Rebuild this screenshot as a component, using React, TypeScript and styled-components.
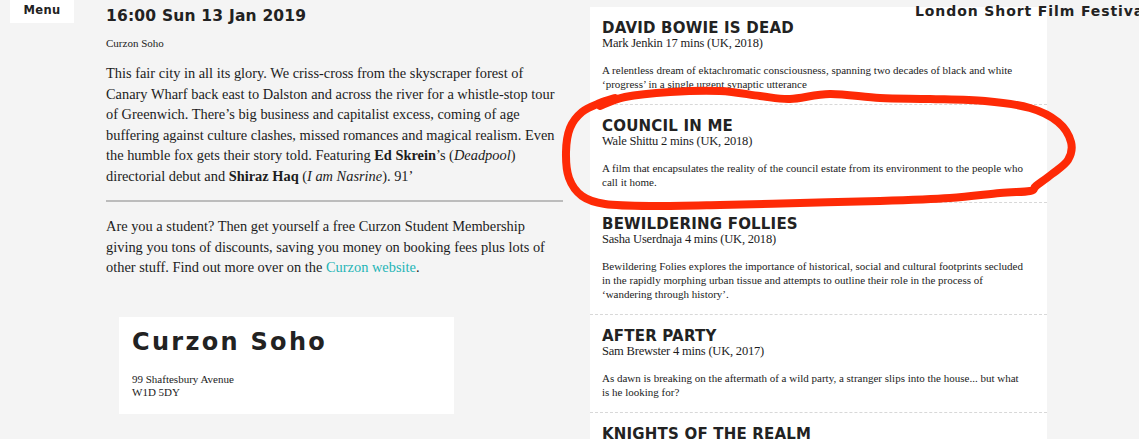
import styled, { createGlobalStyle } from "styled-components";

const GlobalStyle = createGlobalStyle`
  html, body {
    margin: 0;
    padding: 0;
    background: #f4f4f4;
    overflow: hidden;
  }
  body {
    width: 1139px;
    height: 439px;
    color: #1c1c1c;
    font-family: "Liberation Serif", "DejaVu Serif", serif;
  }
`;

const wide = `"DejaVu Sans", "Liberation Sans", sans-serif`;

const Page = styled.div`
  position: relative;
  display: flex;
  align-items: flex-start;
  height: 439px;
`;

const Nav = styled.nav`
  width: 96px;
  padding-left: 10px;
  flex-shrink: 0;
`;

const MenuButton = styled.div`
  width: 64px;
  height: 23px;
  background: #fff;
  display: flex;
  justify-content: center;
  padding-top: 3px;
  box-sizing: border-box;
  font-family: ${wide};
  font-weight: 700;
  font-size: 11.5px;
  letter-spacing: 0.4px;
  color: #222;
`;

const Main = styled.main`
  width: 457px;
  margin-right: 27px;
  padding-top: 6px;
  flex-shrink: 0;
`;

const Title = styled.h1`
  margin: 0;
  font-family: ${wide};
  font-weight: 700;
  font-size: 15.5px;
  line-height: 20px;
  letter-spacing: 0.2px;
  color: #222;
`;

const Venue = styled.div`
  margin-top: 10px;
  font-size: 11px;
  line-height: 14px;
`;

const Para = styled.p<{ gap: number }>`
  margin: ${({ gap }) => gap}px 0 0;
  font-size: 14.4px;
  line-height: 20.5px;
  white-space: nowrap;

  b {
    font-weight: 700;
  }
`;

const Rule = styled.hr`
  margin: 14px 0 0;
  border: 0;
  height: 2px;
  background: #bcbcbc;
`;

const Link = styled.a`
  color: #1fb4b6;
  text-decoration: none;
`;

const VenueCard = styled.section`
  margin: 39px 0 0 13px;
  width: 335px;
  height: 97px;
  box-sizing: border-box;
  background: #fff;
  padding: 11px 13px 0;
`;

const VenueName = styled.h2`
  margin: 0;
  font-family: ${wide};
  font-weight: 700;
  font-size: 24px;
  line-height: 28px;
  letter-spacing: 2.3px;
  color: #222;
`;

const Address = styled.div`
  margin-top: 17px;
  font-size: 11px;
  line-height: 13px;
`;

const Panel = styled.aside`
  width: 457px;
  margin-top: 7px;
  background: #fff;
  flex-shrink: 0;
  height: 432px;
`;

const Film = styled.article<{ first?: boolean }>`
  padding: 13px 12px 13px;
  border-top: ${({ first }) => (first ? "0" : "1px dashed #d8d8d8")};
`;

const FilmTitle = styled.h3`
  margin: 0;
  font-family: ${wide};
  font-weight: 700;
  font-size: 15px;
  line-height: 16px;
  letter-spacing: 0.2px;
  color: #222;
`;

const FilmMeta = styled.div`
  font-size: 12.5px;
  line-height: 15px;
  letter-spacing: -0.2px;
`;

const FilmText = styled.p`
  margin: 12px 0 0;
  font-size: 11px;
  line-height: 14px;
  white-space: nowrap;
`;

const Festival = styled.div`
  position: absolute;
  top: 3px;
  left: 915px;
  white-space: nowrap;
  font-family: ${wide};
  font-weight: 700;
  font-size: 14px;
  letter-spacing: 0.9px;
  color: #222;
`;

const Scribble = styled.svg`
  position: absolute;
  inset: 0;
  pointer-events: none;
`;

const films = [
  {
    title: "DAVID BOWIE IS DEAD",
    meta: "Mark Jenkin 17 mins (UK, 2018)",
    lines: [
      "A relentless dream of ektachromatic consciousness, spanning two decades of black and white",
      "‘progress’ in a single urgent synaptic utterance",
    ],
  },
  {
    title: "COUNCIL IN ME",
    meta: "Wale Shittu 2 mins (UK, 2018)",
    lines: [
      "A film that encapsulates the reality of the council estate from its environment to the people who",
      "call it home.",
    ],
  },
  {
    title: "BEWILDERING FOLLIES",
    meta: "Sasha Userdnaja 4 mins (UK, 2018)",
    lines: [
      "Bewildering Folies explores the importance of historical, social and cultural footprints secluded",
      "in the rapidly morphing urban tissue and attempts to outline their role in the process of",
      "‘wandering through history’.",
    ],
  },
  {
    title: "AFTER PARTY",
    meta: "Sam Brewster 4 mins (UK, 2017)",
    lines: [
      "As dawn is breaking on the aftermath of a wild party, a stranger slips into the house... but what",
      "is he looking for?",
    ],
  },
  { title: "KNIGHTS OF THE REALM", meta: "", lines: [] as string[] },
];

// rough marker loop drawn round the second film
const loop: [number, number][] = [
  [600, 106], [625, 97], [670, 92], [720, 91], [760, 96], [790, 99],
  [830, 94], [880, 98], [930, 99], [985, 101], [1030, 108], [1058, 122],
  [1071, 142], [1068, 160], [1052, 174], [1036, 186], [1030, 191],
  [1000, 193], [950, 198], [880, 201], [800, 203], [720, 205], [650, 206],
  [605, 204], [582, 196], [569, 178], [566, 152], [570, 128], [582, 112],
  [600, 103], [615, 98],
];

const smooth = (pts: [number, number][]) => {
  let d = `M ${pts[0][0]} ${pts[0][1]}`;
  for (let i = 0; i < pts.length - 1; i++) {
    const p0 = pts[i - 1] || pts[i];
    const p1 = pts[i];
    const p2 = pts[i + 1];
    const p3 = pts[i + 2] || p2;
    const c1x = p1[0] + (p2[0] - p0[0]) / 6;
    const c1y = p1[1] + (p2[1] - p0[1]) / 6;
    const c2x = p2[0] - (p3[0] - p1[0]) / 6;
    const c2y = p2[1] - (p3[1] - p1[1]) / 6;
    d += ` C ${c1x} ${c1y}, ${c2x} ${c2y}, ${p2[0]} ${p2[1]}`;
  }
  return d;
};

const loopPath = smooth(loop);

export default function App() {
  return (
    <>
      <GlobalStyle />
      <Page>
        <Nav>
          <MenuButton>Menu</MenuButton>
        </Nav>

        <Main>
          <Title>16:00 Sun 13 Jan 2019</Title>
          <Venue>Curzon Soho</Venue>
          <Para gap={13}>
            This fair city in all its glory. We criss-cross from the skyscraper forest of
            <br />
            Canary Wharf back east to Dalston and across the river for a whistle-stop tour
            <br />
            of Greenwich. There’s big business and capitalist excess, coming of age
            <br />
            buffering against culture clashes, missed romances and magical realism. Even
            <br />
            the humble fox gets their story told. Featuring <b>Ed Skrein</b>’s (<i>Deadpool</i>)
            <br />
            directorial debut and <b>Shiraz Haq</b> (<i>I am Nasrine</i>). 91’
          </Para>
          <Rule />
          <Para gap={14}>
            Are you a student? Then get yourself a free Curzon Student Membership
            <br />
            giving you tons of discounts, saving you money on booking fees plus lots of
            <br />
            other stuff. Find out more over on the <Link href="#">Curzon website</Link>.
          </Para>
          <VenueCard>
            <VenueName>Curzon Soho</VenueName>
            <Address>
              99 Shaftesbury Avenue
              <br />
              W1D 5DY
            </Address>
          </VenueCard>
        </Main>

        <Panel>
          {films.map((f, i) => (
            <Film key={f.title} first={i === 0}>
              <FilmTitle>{f.title}</FilmTitle>
              {f.meta && <FilmMeta>{f.meta}</FilmMeta>}
              {f.lines.length > 0 && (
                <FilmText>
                  {f.lines.map((l, j) => (
                    <span key={j}>
                      {j > 0 && <br />}
                      {l}
                    </span>
                  ))}
                </FilmText>
              )}
            </Film>
          ))}
        </Panel>

        <Festival>London Short Film Festival</Festival>

        <Scribble width="1139" height="439" viewBox="0 0 1139 439">
          <path
            d={loopPath}
            fill="none"
            stroke="#fe2a06"
            strokeWidth="8"
            strokeLinecap="round"
            strokeLinejoin="round"
          />
        </Scribble>
      </Page>
    </>
  );
}
